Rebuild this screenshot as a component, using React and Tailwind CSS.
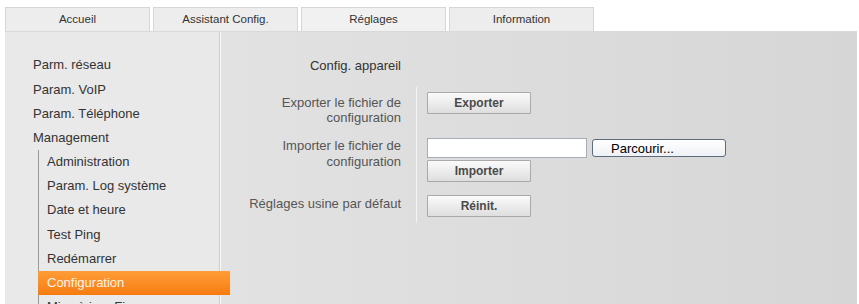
const tabs = ["Accueil", "Assistant Config.", "Réglages", "Information"]

const topItems = ["Parm. réseau", "Param. VoIP", "Param. Téléphone", "Management"]
const subItems = [
  "Administration",
  "Param. Log système",
  "Date et heure",
  "Test Ping",
  "Redémarrer",
  "Configuration",
  "Mise à jour Firmware",
]

function GrayButton({ children }) {
  return (
    <button className="w-[104px] h-[22px] border border-[#a9a9a9] rounded-[1px] bg-gradient-to-b from-[#fbfbfb] to-[#dedede] text-[12px] font-bold text-[#4a4a4a] leading-none">
      {children}
    </button>
  )
}

export default function App() {
  return (
    <main
      className="w-[859px] h-[304px] overflow-hidden bg-white"
      style={{ fontFamily: '"Liberation Sans", Arial, sans-serif' }}
    >
      {/* Tabs */}
      <div className="flex gap-[3px] pl-[5px] pt-[7px]">
        {tabs.map((tab) => (
          <div
            key={tab}
            className={`w-[145px] h-[24px] flex items-center justify-center border border-b-0 border-[#d6d6d6] text-[11.5px] text-[#333] ${
              tab === "Réglages" ? "bg-[#f1f1f1]" : "bg-[#ededed]"
            }`}
          >
            {tab}
          </div>
        ))}
      </div>

      {/* Panel */}
      <div className="ml-[5px] w-[852px] h-[280px] flex border-t border-[#d9d9d9] bg-gradient-to-r from-[#e6e6e6] to-[#d6d6d6]">
        {/* Sidebar */}
        <div className="w-[215px] shrink-0 bg-[#e9e9e9] border-r border-[#cdcdcd] shadow-[1px_0_0_#fafafa] pt-[21px] text-[13px] text-[#333] relative z-10">
          {topItems.map((item) => (
            <div key={item} className="h-[24.2px] flex items-center pl-[28px]">
              {item}
            </div>
          ))}
          <div className="ml-[33px] border-l border-[#9a9a9a]">
            {subItems.map((item) =>
              item === "Configuration" ? (
                <div
                  key={item}
                  className="w-[192px] -ml-px h-[24.2px] flex items-center pl-[9px] bg-gradient-to-b from-[#ff9d36] to-[#f57c0c] text-[#fff4e6]"
                >
                  {item}
                </div>
              ) : (
                <div key={item} className="h-[24.2px] flex items-center pl-[8px]">
                  {item}
                </div>
              )
            )}
          </div>
        </div>

        {/* Main */}
        <div className="flex-1 pt-[26px] text-[13px]">
          <div className="flex">
            <div className="w-[181px] text-right text-[#333] leading-[16px]">Config. appareil</div>
          </div>

          <div className="mt-[13px]">
            {/* Export */}
            <div className="flex">
              <div className="w-[181px] text-right text-[#555] leading-[15px] pt-[8px]">
                Exporter le fichier de
                <br />
                configuration
              </div>
              <div className="ml-[15px] border-l border-[#f3f3f3] pl-[10px] pt-[5px] h-[46px]">
                <GrayButton>Exporter</GrayButton>
              </div>
            </div>

            {/* Import */}
            <div className="flex">
              <div className="w-[181px] text-right text-[#555] leading-[16px] pt-[5px]">
                Importer le fichier de
                <br />
                configuration
              </div>
              <div className="ml-[15px] border-l border-[#f3f3f3] pl-[10px] pt-[5px] h-[55px]">
                <div className="flex items-center gap-[5px]">
                  <input
                    type="text"
                    className="w-[160px] h-[20px] border border-[#a5aeb8] bg-white outline-none"
                  />
                  <button className="w-[134px] h-[18px] border-[1.5px] border-[#5d6b7c] rounded-[3px] bg-gradient-to-b from-white to-[#eef1f5] text-left pl-[18px] text-[13px] text-black leading-none">
                    Parcourir...
                  </button>
                </div>
                <div className="mt-[2px]">
                  <GrayButton>Importer</GrayButton>
                </div>
              </div>
            </div>

            {/* Reset */}
            <div className="flex">
              <div className="w-[181px] text-right text-[#555] leading-[15px] pt-[8px]">
                Réglages usine par défaut
              </div>
              <div className="ml-[15px] border-l border-[#f3f3f3] pl-[10px] pt-[7px] h-[35px]">
                <GrayButton>Réinit.</GrayButton>
              </div>
            </div>
          </div>
        </div>
      </div>
    </main>
  )
}
